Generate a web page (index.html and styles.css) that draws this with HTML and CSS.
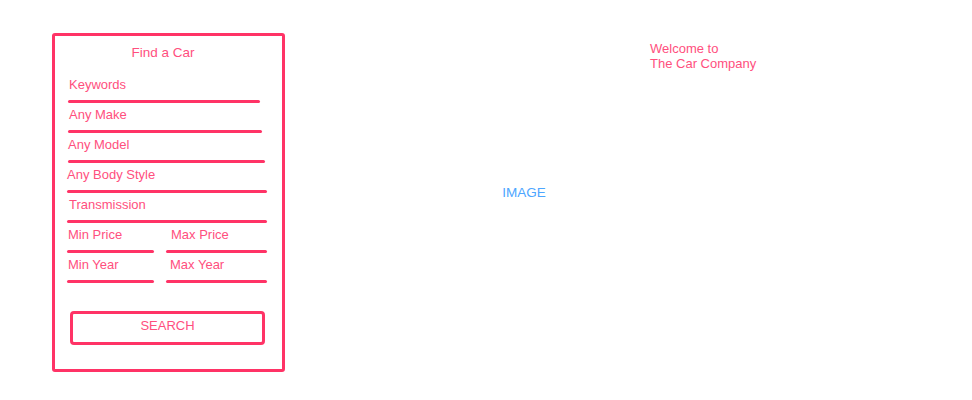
FILE: index.html
```html
<!DOCTYPE html>
<html lang="en">
<head>
<meta charset="utf-8">
<title>The Car Company</title>
<link rel="stylesheet" href="styles.css">
</head>
<body>
<div class="page">
  <form class="finder">
    <div class="finder-title">Find a Car</div>
    <div class="field"><span class="label">Keywords</span><span class="line"></span></div>
    <div class="field"><span class="label">Any Make</span><span class="line line-make"></span></div>
    <div class="field"><span class="label label-model">Any Model</span><span class="line line-model"></span></div>
    <div class="field"><span class="label label-body">Any Body Style</span><span class="line line-wide"></span></div>
    <div class="field"><span class="label">Transmission</span><span class="line line-wide"></span></div>
    <div class="pair">
      <div class="field"><span class="label">Min Price</span><span class="line"></span></div>
      <div class="field"><span class="label label-right">Max Price</span><span class="line"></span></div>
    </div>
    <div class="pair">
      <div class="field"><span class="label">Min Year</span><span class="line"></span></div>
      <div class="field"><span class="label label-right2">Max Year</span><span class="line"></span></div>
    </div>
    <div class="search">SEARCH</div>
  </form>
  <main class="hero">
    <div class="welcome">Welcome to<br>The Car Company</div>
    <div class="image">IMAGE</div>
  </main>
</div>
</body>
</html>
```
FILE: styles.css
```css
* { box-sizing: border-box; }
html, body { margin: 0; padding: 0; background: #ffffff; }
body {
  font-family: "Liberation Sans", Arial, sans-serif;
  font-size: 13px;
  color: #ff4f7e;
}
.page {
  display: flex;
  padding: 33px 0 0 52px;
  width: 972px;
  height: 400px;
}
.finder {
  width: 233px;
  height: 339px;
  border: 3px solid #ff3366;
  border-radius: 3px;
  padding: 9px 18px 0 13px;
  display: flex;
  flex-direction: column;
}
.finder-title {
  text-align: center;
  font-size: 13.5px;
  line-height: 16px;
  height: 16px;
  margin: 0 0 16px 0;
  padding-right: 6px;
}
.field {
  display: flex;
  flex-direction: column;
  height: 30px;
}
.label {
  display: block;
  line-height: 16px;
  height: 16px;
  padding-left: 1px;
}
.label-model { padding-left: 0; }
.label-body { padding-left: 0; margin-left: -1px; }
.line {
  display: block;
  height: 3px;
  margin-top: 7px;
  background: #ff3366;
  border-radius: 2px;
  width: 192px;
}
.line-make { width: 194px; }
.line-model { width: 197px; }
.line-wide { width: 200px; margin-left: -1px; }
.pair {
  display: grid;
  grid-template-columns: 87px 101px;
  column-gap: 12px;
  margin-left: -1px;
}
.pair .line { width: 100%; }
.pair .label { padding-left: 1px; }
.pair .label-right { padding-left: 5px; }
.pair .label-right2 { padding-left: 4px; }
.search {
  margin: 24px 0 0 2px;
  width: 195px;
  height: 34px;
  border: 3px solid #ff3366;
  border-radius: 4px;
  text-align: center;
  line-height: 24px;
  font-size: 13px;
}
.hero {
  flex: 1;
  display: flex;
  flex-direction: column;
  padding-top: 8px;
}
.welcome {
  padding-left: 365px;
  line-height: 15px;
  font-size: 13px;
}
.image {
  width: 478px;
  margin-top: 114px;
  text-align: center;
  line-height: 16px;
  font-size: 13.5px;
  color: #4da6ff;
}
```
